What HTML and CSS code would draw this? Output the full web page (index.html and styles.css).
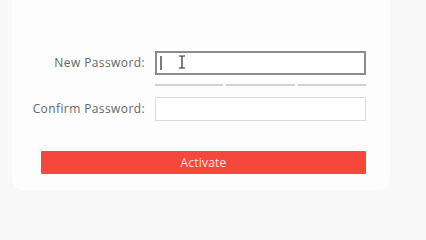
FILE: index.html
```html
<!DOCTYPE html>
<html lang="en">
<head>
<meta charset="utf-8">
<title>Activate</title>
<link rel="stylesheet" href="styles.css">
</head>
<body>
<div class="card">
  <form class="form">
    <div class="row">
      <label class="label">New Password:</label>
      <div class="field field-focus">
        <span class="caret"></span>
        <svg class="ibeam" width="8" height="14" viewBox="0 0 8 14">
          <path d="M1 1h2.2c.5 0 .8.3.8.8M7 1H4.8c-.5 0-.8.3-.8.8v10.4c0 .5-.3.8-.8.8H1M7 13H4.8c-.5 0-.8-.3-.8-.8" fill="none" stroke="#2c2c2c" stroke-width="1.2"/>
        </svg>
      </div>
    </div>
    <div class="row row-bars">
      <span class="label"></span>
      <div class="bars">
        <span class="bar"></span>
        <span class="bar"></span>
        <span class="bar"></span>
      </div>
    </div>
    <div class="row row-confirm">
      <label class="label">Confirm Password:</label>
      <div class="field"></div>
    </div>
    <div class="actions">
      <button type="button" class="btn">Activate</button>
    </div>
  </form>
</div>
</body>
</html>
```

FILE: styles.css
```css
html, body {
  margin: 0;
  padding: 0;
}
body {
  width: 426px;
  height: 200px;
  background: #f9f9f9;
  font-family: "Open Sans", "Liberation Sans", sans-serif;
  overflow: hidden;
}
.card {
  margin-left: 12px;
  width: 378px;
  height: 190px;
  background: #fdfdfd;
  border-radius: 0 0 10px 10px;
  box-shadow: 0 0 6px rgba(0, 0, 0, 0.015);
  padding-top: 51px;
  box-sizing: border-box;
}
.form {
  display: flex;
  flex-direction: column;
  margin: 0;
}
.row {
  display: flex;
  align-items: center;
  gap: 10px;
}
.label {
  width: 133px;
  flex: none;
  text-align: right;
  font-size: 12px;
  letter-spacing: 0.4px;
  color: #666;
  line-height: 16px;
}
.field {
  position: relative;
  width: 211px;
  height: 24px;
  box-sizing: border-box;
  border: 1px solid #dcdcdc;
  background: #fff;
}
.field-focus {
  border: 2px solid #8c8c8c;
}
.caret {
  position: absolute;
  left: 3px;
  top: 3px;
  width: 1.5px;
  height: 14px;
  background: #7a7a7a;
}
.ibeam {
  position: absolute;
  left: 21px;
  top: 2px;
}
.row-bars {
  margin-top: 9px;
}
.bars {
  display: flex;
  gap: 3px;
  width: 211px;
}
.bar {
  flex: 1;
  height: 2px;
  background: #d2d2d2;
}
.row-confirm {
  margin-top: 11px;
}
.actions {
  margin-top: 30px;
  padding-left: 29px;
}
.btn {
  display: block;
  width: 325px;
  height: 23px;
  border: none;
  border-radius: 1px;
  background: #f5473c;
  color: #fde8e4;
  font-family: "Open Sans", "Liberation Sans", sans-serif;
  font-size: 12px;
  letter-spacing: 0.2px;
  padding: 0;
  cursor: pointer;
}
```
